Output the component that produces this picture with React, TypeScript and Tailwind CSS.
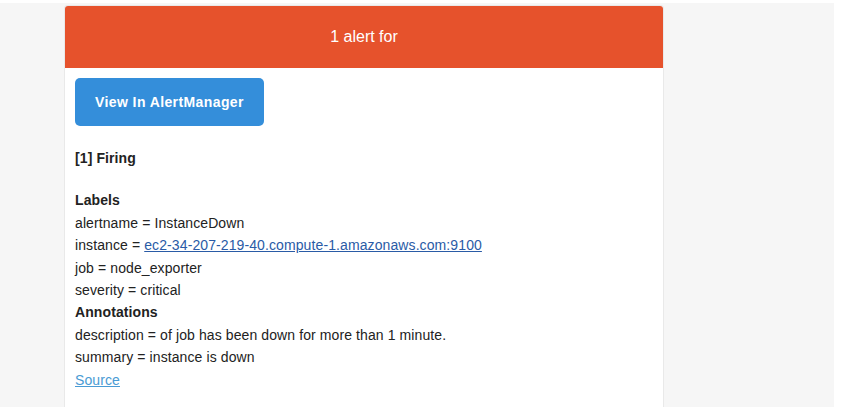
export default function App() {
  const labels = [
    { key: "alertname", value: "InstanceDown" },
    { key: "instance", value: "ec2-34-207-219-40.compute-1.amazonaws.com:9100", link: true },
    { key: "job", value: "node_exporter" },
    { key: "severity", value: "critical" }
  ];

  const annotations = [
    { key: "description", value: "of job has been down for more than 1 minute." },
    { key: "summary", value: "instance is down" }
  ];

  return (
    <div
      className="h-[407px] overflow-hidden bg-white"
      style={{ fontFamily: '"Liberation Sans", Arial, Helvetica, sans-serif' }}
    >
      <div className="mt-[3px] h-[404px] w-[834px] bg-[#f6f6f6] pl-[64px] pt-[2px]">
        <div className="h-[420px] w-[600px] rounded-[3px] border border-[#e9e9e9] bg-white">
          <div className="flex h-[62px] items-center justify-center rounded-t-[3px] bg-[#e6522c] text-[16px] text-white">
            1 alert for
          </div>

          <div className="px-[10px] pt-[10px] text-[14px] leading-[22.4px] tracking-[0.1px] text-[#222]">
            <a
              href="#"
              className="flex h-[48px] w-[189px] items-center justify-center rounded-[5px] bg-[#348eda] font-bold tracking-[0.4px] text-white"
            >
              View In AlertManager
            </a>

            <div className="mt-[21px] font-bold">[1] Firing</div>

            <div className="mt-[20px] font-bold">Labels</div>
            {labels.map((item) => (
              <div key={item.key}>
                {item.key} ={" "}
                {item.link ? (
                  <a href="#" className="text-[#2a5ba6] underline">
                    {item.value}
                  </a>
                ) : (
                  item.value
                )}
              </div>
            ))}

            <div className="font-bold">Annotations</div>
            {annotations.map((item) => (
              <div key={item.key}>
                {item.key} = {item.value}
              </div>
            ))}

            <a href="#" className="text-[#4a9bd4] underline">
              Source
            </a>
          </div>
        </div>
      </div>
    </div>
  );
}
